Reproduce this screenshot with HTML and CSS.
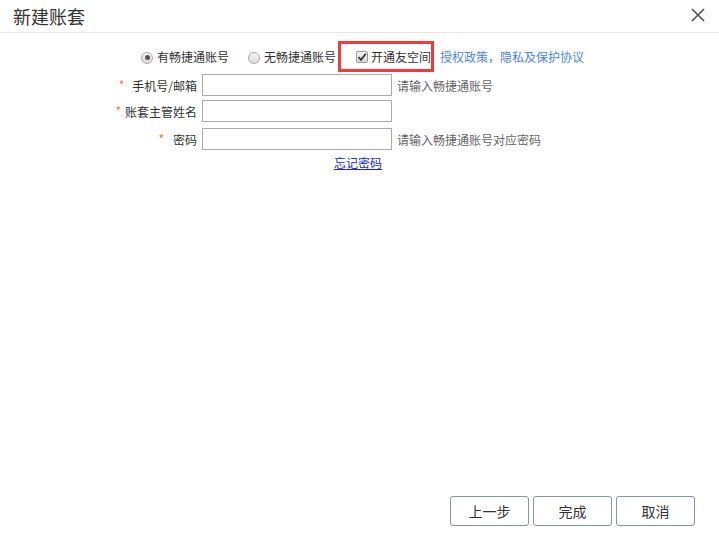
FILE: index.html
```html
<!DOCTYPE html>
<html lang="zh">
<head>
<meta charset="utf-8">
<title>新建账套</title>
<link rel="stylesheet" href="styles.css">
</head>
<body>
<div class="dialog">
  <div class="header">
    <div class="title">新建账套</div>
    <svg class="close" width="14" height="14" viewBox="0 0 14 14"><path d="M1 1 L13 13 M13 1 L1 13" stroke="#555" stroke-width="1.7" fill="none"/></svg>
  </div>
  <div class="body">
    <div class="choice-row">
      <span class="radio checked"></span><span class="opt">有畅捷通账号</span>
      <span class="radio second"></span><span class="opt">无畅捷通账号</span>
      <span class="highlight"><span class="checkbox"><svg width="10" height="10" viewBox="0 0 10 10"><path d="M1.5 5.2 L4 7.8 L8.8 1.8" stroke="#333" stroke-width="1.8" fill="none"/></svg></span><span class="opt">开通友空间</span></span>
      <a class="policy">授权政策，隐私及保护协议</a>
    </div>
    <div class="form-row r1">
      <div class="label"><span class="star">*</span>手机号/邮箱</div>
      <div class="input"></div>
      <div class="hint">请输入畅捷通账号</div>
    </div>
    <div class="form-row r2">
      <div class="label"><span class="star">*</span>账套主管姓名</div>
      <div class="input"></div>
    </div>
    <div class="form-row r3">
      <div class="label"><span class="star">*</span>密码</div>
      <div class="input"></div>
      <div class="hint">请输入畅捷通账号对应密码</div>
    </div>
    <div class="forgot-row"><a class="forgot">忘记密码</a></div>
  </div>
  <div class="footer">
    <button class="btn">上一步</button>
    <button class="btn">完成</button>
    <button class="btn">取消</button>
  </div>
</div>
</body>
</html>
```
FILE: styles.css
```css
html, body {
  margin: 0;
  padding: 0;
  background: #fff;
}
body {
  font-family: "Noto Sans CJK SC", "Microsoft YaHei", sans-serif;
  font-size: 12px;
  color: #333;
}
.dialog {
  width: 719px;
  height: 534px;
  display: flex;
  flex-direction: column;
}
.header {
  height: 32px;
  border-bottom: 1px solid #e5e5e5;
  display: flex;
  align-items: center;
  justify-content: space-between;
  padding: 0 14px 0 13px;
}
.title {
  font-size: 18px;
  color: #333;
  line-height: 32px;
  margin-top: -1px;
}
.close {
  margin-top: -3px;
}
.body {
  flex: 1;
}
.choice-row {
  display: flex;
  align-items: center;
  margin-top: 8px;
  padding-left: 141px;
  height: 31px;
}
.radio {
  width: 10px;
  height: 10px;
  border: 1px solid #aaa;
  border-radius: 50%;
  background: linear-gradient(#f4f4f4, #dcdcdc);
  margin-right: 4px;
  position: relative;
  margin-top: 2px;
}
.radio.checked::after {
  content: "";
  position: absolute;
  left: 2.5px;
  top: 2.5px;
  width: 5px;
  height: 5px;
  border-radius: 50%;
  background: #555;
}
.radio.second {
  margin-left: 19px;
}
.opt {
  line-height: 16px;
  color: #333;
}
.highlight {
  display: flex;
  align-items: center;
  border: 3px solid #ee3b3b;
  height: 25px;
  margin-left: 2px;
  padding-left: 15px;
  width: 75px;
}
.checkbox {
  width: 10px;
  height: 10px;
  border: 1px solid #999;
  border-radius: 2px;
  background: linear-gradient(#f4f4f4, #d8d8d8);
  margin-right: 3px;
  margin-top: 1px;
  display: flex;
  align-items: center;
  justify-content: center;
}
.policy {
  color: #4a86e8;
  margin-left: 6px;
}
.form-row {
  display: flex;
  align-items: center;
  height: 22px;
}
.r1 { margin-top: 2px; }
.r2 { margin-top: 4px; }
.r3 { margin-top: 6px; }
.label {
  width: 197px;
  text-align: right;
  color: #333;
}
.star {
  color: #f2704e;
  margin-right: 8px;
  font-size: 12px;
  position: relative;
  top: -1px;
}
.r2 .star { margin-right: 4px; }
.r3 .star { margin-right: 9px; }
.input {
  width: 188px;
  height: 20px;
  border: 1px solid #aaa;
  margin-left: 5px;
  background: #fff;
}
.hint {
  margin-left: 5px;
  color: #666;
}
.forgot-row {
  padding-left: 334px;
  margin-top: 4px;
}
.forgot {
  color: #1a2dbf;
  text-decoration: underline;
}
.footer {
  display: flex;
  justify-content: flex-end;
  gap: 4px;
  padding: 0 24px 8px 0;
}
.btn {
  width: 79px;
  height: 30px;
  border: 1px solid #8995a3;
  border-radius: 3px;
  background: #fff;
  font-family: "Noto Sans CJK SC", "Microsoft YaHei", sans-serif;
  font-size: 14px;
  color: #333;
  padding: 0;
}
```
